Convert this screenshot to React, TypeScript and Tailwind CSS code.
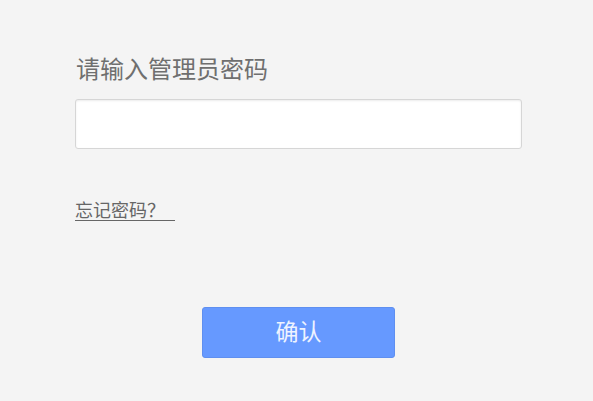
export default function App() {
  return (
    <div
      className="w-[593px] h-[401px] bg-[#f4f4f4] overflow-hidden"
      style={{ fontFamily: '"Liberation Sans", "Noto Sans CJK SC", sans-serif' }}
    >
      <div className="pl-[75px] pr-[71px] pt-[55px]">
        <p className="text-[24px] leading-[30px] text-[#6f6f6f] pl-px">请输入管理员密码</p>
        <input
          type="password"
          className="mt-[14px] block w-full h-[50px] bg-white border border-[#d6d6d6] rounded-[3px] shadow-[inset_0_1px_2px_rgba(0,0,0,0.08)] outline-none px-3"
        />
        <a href="#" className="mt-[51px] inline-block text-[18px] leading-[22px] text-[#666] underline underline-offset-[3px] whitespace-pre">
          {'忘记密码？\u00a0\u00a0'}
        </a>
        <div className="flex pl-[127px] mt-[83px]">
          <button className="w-[193px] h-[51px] rounded-[3px] bg-[#6699ff] text-[23px] text-[#eef3ff] border border-[#5f8ff0]">
            确认
          </button>
        </div>
      </div>
    </div>
  )
}
